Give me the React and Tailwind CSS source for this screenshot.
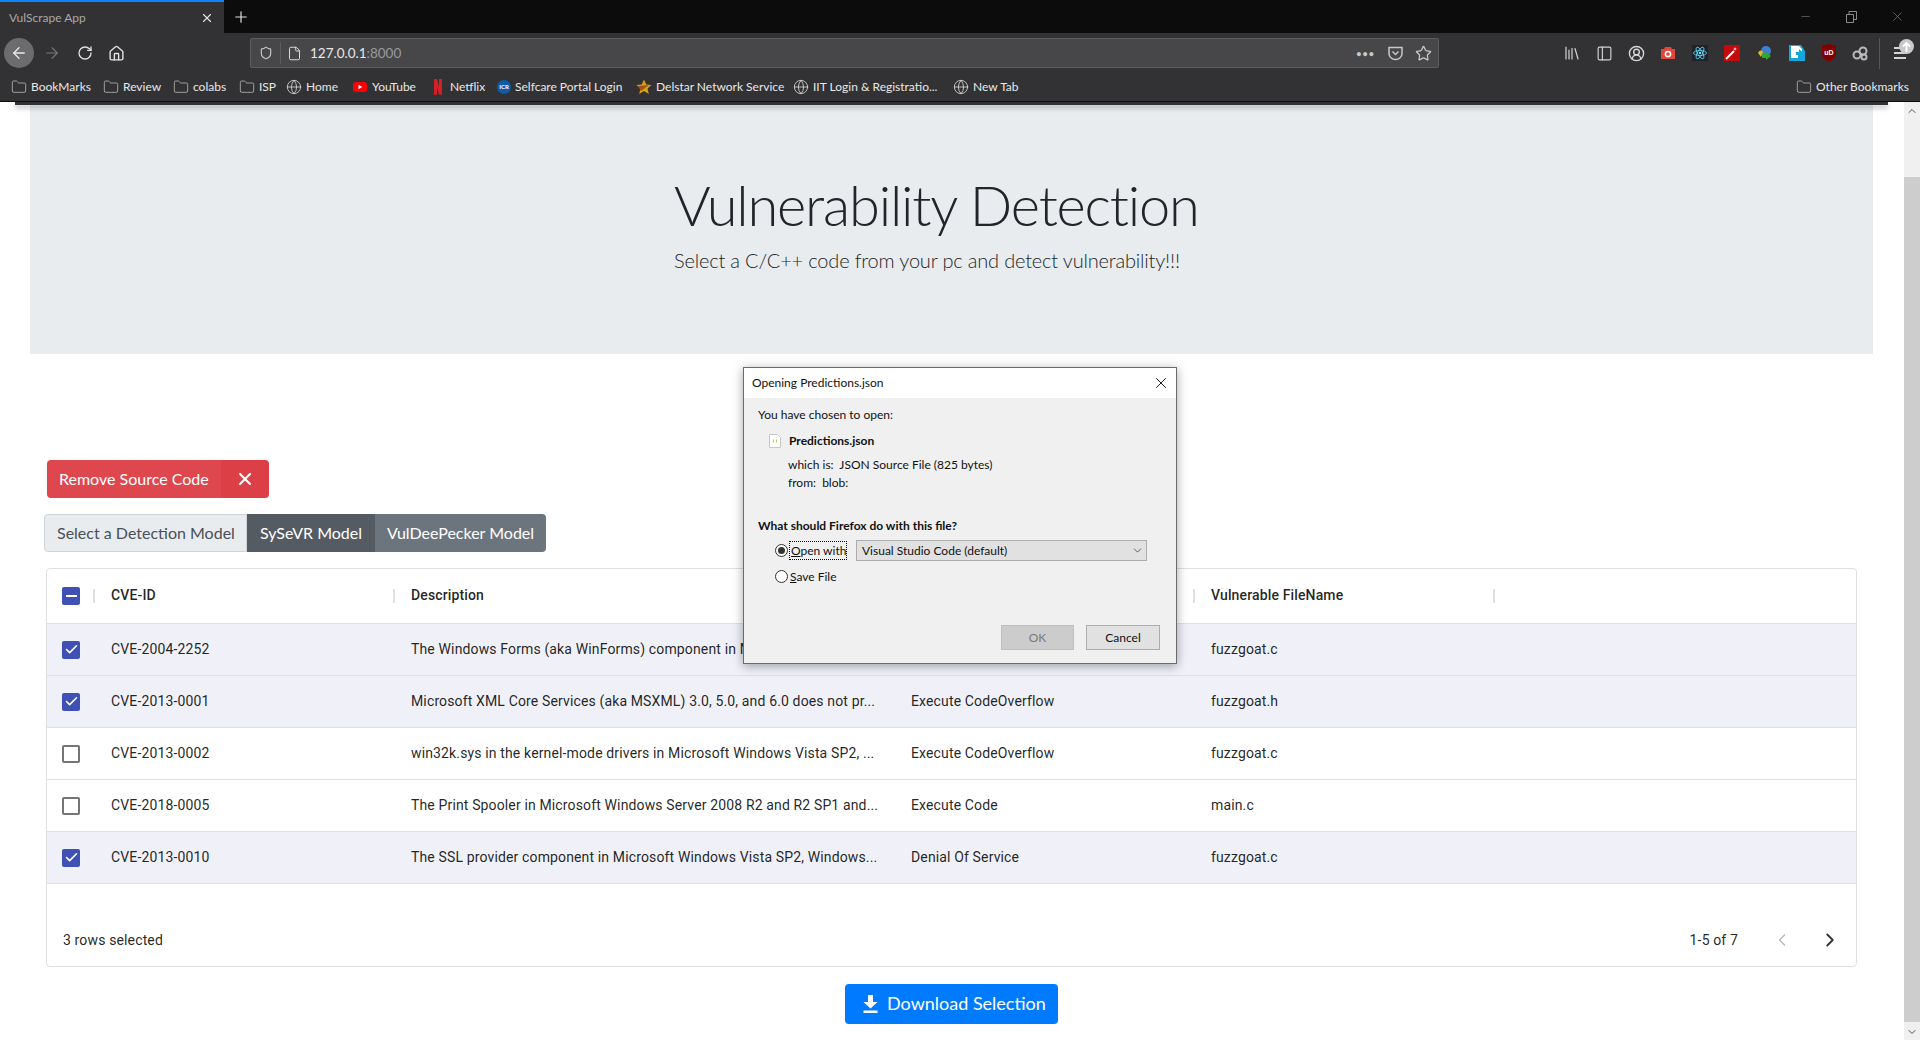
import { ArrowLeft, ArrowRight, RotateCw, Home, File, Folder, Globe, Star, Library, PanelLeft, CircleUserRound, X, Plus, Minus, ChevronLeft, ChevronRight, ChevronDown, ChevronUp, Check, Shield } from 'lucide-react'

const bookmarks = [
  { name: 'BookMarks', kind: 'folder', w: 'w-[92px]' },
  { name: 'Review', kind: 'folder', w: 'w-[70px]' },
  { name: 'colabs', kind: 'folder', w: 'w-[66px]' },
  { name: 'ISP', kind: 'folder', w: 'w-[47px]' },
  { name: 'Home', kind: 'globe', w: 'w-[66px]' },
  { name: 'YouTube', kind: 'yt', w: 'w-[78px]' },
  { name: 'Netflix', kind: 'netflix', w: 'w-[67px]' },
  { name: 'Selfcare Portal Login', kind: 'icr', w: 'w-[139px]' },
  { name: 'Delstar Network Service', kind: 'star', w: 'w-[157px]' },
  { name: 'IIT Login & Registratio...', kind: 'globe', w: 'w-[160px]' },
  { name: 'New Tab', kind: 'globe', w: 'w-[80px]' },
]

const rows = [
  { id: 'CVE-2004-2252', desc: 'The Windows Forms (aka WinForms) component in Microsoft .NET Framework 1.0 SP3...', type: 'Execute Code', file: 'fuzzgoat.c', on: true },
  { id: 'CVE-2013-0001', desc: 'Microsoft XML Core Services (aka MSXML) 3.0, 5.0, and 6.0 does not pr...', type: 'Execute CodeOverflow', file: 'fuzzgoat.h', on: true },
  { id: 'CVE-2013-0002', desc: 'win32k.sys in the kernel-mode drivers in Microsoft Windows Vista SP2, ...', type: 'Execute CodeOverflow', file: 'fuzzgoat.c', on: false },
  { id: 'CVE-2018-0005', desc: 'The Print Spooler in Microsoft Windows Server 2008 R2 and R2 SP1 and...', type: 'Execute Code', file: 'main.c', on: false },
  { id: 'CVE-2013-0010', desc: 'The SSL provider component in Microsoft Windows Vista SP2, Windows...', type: 'Denial Of Service', file: 'fuzzgoat.c', on: true },
]

function BookmarkIcon({ kind }) {
  if (kind === 'folder') return <Folder size={16} strokeWidth={1} className="shrink-0 text-[#d4d4d5]" />
  if (kind === 'globe') return <Globe size={16} strokeWidth={1.3} className="shrink-0 text-[#d4d4d5]" />
  if (kind === 'yt') {
    return (
      <svg width="16" height="16" viewBox="0 0 16 16" className="shrink-0">
        <rect x="1" y="3" width="14" height="10" rx="3" fill="#f00" />
        <path d="M6.5 5.8v4.4L10.2 8z" fill="#fff" />
      </svg>
    )
  }
  if (kind === 'netflix') {
    return (
      <svg width="16" height="16" viewBox="0 0 16 16" className="shrink-0">
        <path d="M4 0h3l2 8V0h3v16l-3-.5L7 8v7.6L4 16z" fill="#d81f26" />
      </svg>
    )
  }
  if (kind === 'icr') {
    return (
      <div className="flex h-[14px] w-[14px] shrink-0 items-center justify-center rounded-full bg-[#0b5cad] text-[6px] font-bold leading-none text-white">
        ICR
      </div>
    )
  }
  return (
    <svg width="16" height="16" viewBox="0 0 16 16" className="shrink-0">
      <path d="M8 .5l2.2 5 5.3.4-4 3.5 1.3 5.6L8 11.900 3.200 15l1.300-5.600-4-3.500 5.300-.4z" fill="#d9a21b" />
      <path d="M2 7l11-1-8 6z" fill="#a5521a" />
    </svg>
  )
}

function Extensions() {
  return (
    <div className="flex items-center">
      <div className="flex w-[32px] justify-center">
        <Library size={18} strokeWidth={1.6} className="text-[#d4d4d5]" />
      </div>
      <div className="flex w-[32px] justify-center">
        <PanelLeft size={17} strokeWidth={1.6} className="text-[#d4d4d5]" />
      </div>
      <div className="flex w-[32px] justify-center">
        <CircleUserRound size={17} strokeWidth={2} className="text-[#d4d4d5]" />
      </div>
      <div className="flex w-[32px] justify-center">
        <svg width="16" height="16" viewBox="0 0 16 16">
          <path d="M1 4h3l1-2h6l1 2h3v10H1z" fill="#e2473c" />
          <circle cx="8" cy="9" r="2.600" fill="none" stroke="#fff" strokeWidth="1.500" />
        </svg>
      </div>
      <div className="flex w-[32px] justify-center">
        <svg width="16" height="16" viewBox="0 0 16 16">
          <rect width="16" height="16" fill="#20232a" />
          <g fill="none" stroke="#61dafb" strokeWidth="0.800">
            <ellipse cx="8" cy="8" rx="6.500" ry="2.500" />
            <ellipse cx="8" cy="8" rx="6.500" ry="2.500" transform="rotate(60 8 8)" />
            <ellipse cx="8" cy="8" rx="6.500" ry="2.500" transform="rotate(120 8 8)" />
          </g>
          <circle cx="8" cy="8" r="1.300" fill="#61dafb" />
        </svg>
      </div>
      <div className="flex w-[32px] justify-center">
        <svg width="16" height="16" viewBox="0 0 16 16">
          <rect width="16" height="16" fill="#c40b0b" />
          <path d="M2 14L10 6" stroke="#fff" strokeWidth="2" />
          <path d="M11 2l.5 1.500L13 4l-1.500.5L11 6l-.5-1.500L9 4l1.500-.5z" fill="#fff" />
        </svg>
      </div>
      <div className="flex w-[33px] justify-center">
        <svg width="16" height="16" viewBox="0 0 16 16">
          <circle cx="9" cy="6" r="5" fill="#3f7fd0" />
          <path d="M1 8c2-3 3-3 5-1l-2 5z" fill="#e9b320" />
          <path d="M5 9h4V7l5 4-5 4v-2H5z" fill="#31a82c" />
        </svg>
      </div>
      <div className="flex w-[32px] justify-center">
        <svg width="16" height="16" viewBox="0 0 16 16">
          <path d="M0 0h12l4 6v10H0z" fill="#14a5dd" />
          <path d="M2 1h8l3 3v4H9v5H2z" fill="#fff" />
          <path d="M7 7h3V4l5 4.500L10 13v-3H7z" fill="#14a5dd" />
        </svg>
      </div>
      <div className="flex w-[31px] justify-center">
        <svg width="16" height="18" viewBox="0 0 16 18">
          <path d="M8 0l7 2v8c0 4-4 6-7 8-3-2-7-4-7-8V2z" fill="#800000" />
          <text x="8" y="11" textAnchor="middle" fontSize="7" fontWeight="700" fill="#fff" fontFamily="Liberation Sans, sans-serif">uD</text>
        </svg>
      </div>
      <div className="flex w-[32px] justify-center">
        <svg width="18" height="16" viewBox="0 0 18 16">
          <g fill="none" stroke="#b9b9ba" strokeWidth="2">
            <circle cx="6" cy="10" r="3.500" />
            <circle cx="12" cy="6" r="3.500" />
            <circle cx="13" cy="12" r="2.500" />
          </g>
        </svg>
      </div>
    </div>
  )
}

function BrowserChrome() {
  return (
    <div className="relative z-10 shrink-0 bg-[#323234]">
      <div className="flex h-[33px] items-center bg-[#0c0c0d]">
        <div className="flex h-full w-[224px] items-center justify-between border-t-2 border-[#0a84ff] bg-[#323234] pl-[9px] pr-[10px] text-[12px] text-[#a9a9aa]">
          <span>VulScrape App</span>
          <X size={14} strokeWidth={2} className="text-[#e0e0e1]" />
        </div>
        <Plus size={18} strokeWidth={1.6} className="ml-[8px] text-[#e0e0e1]" />
        <div className="ml-auto flex items-center">
          <div className="flex w-[46px] justify-center">
            <Minus size={13} strokeWidth={1} className="text-[#8c8c8d]" />
          </div>
          <div className="flex w-[46px] justify-center">
            <svg width="11" height="12" viewBox="0 0 11 12" fill="none" stroke="#8c8c8d">
              <path d="M.5 3.500h7v8h-7zM3 3.500V.5h7.500v8H7.500" />
            </svg>
          </div>
          <div className="flex w-[46px] justify-center">
            <X size={15} strokeWidth={1} className="text-[#8c8c8d]" />
          </div>
        </div>
      </div>

      <div className="flex h-[38px] items-center pl-[4px] pt-[2px]">
        <div className="flex h-[30px] w-[30px] items-center justify-center rounded-full bg-[#6c6c6e]">
          <ArrowLeft size={18} strokeWidth={1.8} className="text-[#e8e8e9]" />
        </div>
        <ArrowRight size={18} strokeWidth={1.5} className="ml-[9px] text-[#78787a]" />
        <RotateCw size={16} strokeWidth={2} className="ml-[16px] text-[#e0e0e1]" />
        <Home size={17} strokeWidth={2} className="ml-[15px] text-[#e0e0e1]" />
        <div className="ml-[125px] flex h-[30px] w-[1189px] items-center rounded-[2px] border border-[#5d5d5f] bg-[#474749] pl-[8px] pr-[6px]">
          <Shield size={14} strokeWidth={2} className="text-[#c8c8c9]" />
          <div className="ml-[7px] h-[22px] w-px bg-[#5d5d5f]" />
          <File size={15} strokeWidth={1.6} className="ml-[6px] text-[#dcdcdd]" />
          <span className="ml-[8px] text-[13.5px] text-[#e8e8e9]">
            127.0.0.1<span className="text-[#9a9a9b]">:8000</span>
          </span>
          <span className="ml-auto text-[9px] font-bold leading-none tracking-[1px] text-[#c8c8c9]">•••</span>
          <svg width="17" height="17" viewBox="0 0 17 17" fill="none" stroke="#c8c8c9" strokeWidth="1.500" className="ml-[12px]">
            <path d="M2 2.500h13v6c0 3.500-3 6-6.500 6S2 12 2 8.500z" />
            <path d="M5.500 6.500l3 3 3-3" />
          </svg>
          <Star size={17} strokeWidth={1.8} className="ml-[11px] text-[#c8c8c9]" />
        </div>
        <div className="ml-auto flex items-center">
          <Extensions />
          <div className="ml-[3px] h-[31px] w-px bg-[#57575a]" />
          <div className="relative flex w-[40px] justify-center">
            <svg width="14" height="14" viewBox="0 0 14 14" stroke="#d4d4d5" strokeWidth="2">
              <path d="M1 2h12M1 7h12M1 12h12" />
            </svg>
            <div className="absolute -top-[7px] right-[6px] flex h-[15px] w-[15px] items-center justify-center rounded-full bg-[#c9c9ca]">
              <svg width="9" height="10" viewBox="0 0 9 10" fill="none" stroke="#fff" strokeWidth="1.800">
                <path d="M4.500 10V1M1 4.500L4.500 1 8 4.500" />
              </svg>
            </div>
          </div>
        </div>
      </div>

      <div className="flex h-[31px] items-center border-b border-[#0c0c0d] pl-[11px] pr-[11px] pt-[2px] text-[12px] text-[#e8e8e9]">
        {bookmarks.map((b) => (
          <div key={b.name} className={`flex items-center gap-[4px] ${b.w}`}>
            <BookmarkIcon kind={b.kind} />
            <span className="whitespace-nowrap">{b.name}</span>
          </div>
        ))}
        <div className="ml-auto flex items-center gap-[4px]">
          <BookmarkIcon kind="folder" />
          <span>Other Bookmarks</span>
        </div>
      </div>
    </div>
  )
}

function GridCheckbox({ on, partial }) {
  if (on || partial) {
    return (
      <div className="flex h-[18px] w-[18px] items-center justify-center rounded-[2px] bg-[#3f51b5]">
        {partial
          ? <div className="h-[2px] w-[11px] bg-white" />
          : <Check size={15} strokeWidth={2.6} className="text-white" />}
      </div>
    )
  }
  return <div className="h-[18px] w-[18px] rounded-[2px] border-2 border-[#757575]" />
}

function Separator() {
  return <div className="ml-auto h-[14px] w-[2px] bg-[#e0e0e0]" />
}

function DataTable() {
  return (
    <div className="ml-[46px] mt-[16px] h-[399px] w-[1811px] rounded-[4px] border border-[#e0e0e0] font-['Roboto',sans-serif] text-[14px] tracking-[0.14px] text-[rgba(0,0,0,0.87)]">
      <div className="flex h-[55px] items-center border-b border-[#e0e0e0] pb-[1px] font-medium">
        <div className="flex w-[48px] items-center pl-[15px]">
          <GridCheckbox partial />
          <Separator />
        </div>
        <div className="flex w-[300px] items-center pl-[16px]">CVE-ID<Separator /></div>
        <div className="flex w-[500px] items-center pl-[16px]">Description<Separator /></div>
        <div className="flex w-[300px] items-center pl-[16px]">Vulnerability Type<Separator /></div>
        <div className="flex w-[300px] items-center pl-[16px]">Vulnerable FileName<Separator /></div>
      </div>
      {rows.map((r) => (
        <div key={r.id} className={`flex h-[52px] items-center border-b border-[#e0e0e0] ${r.on ? 'bg-[#eff0f8]' : ''}`}>
          <div className="w-[48px] pl-[15px]"><GridCheckbox on={r.on} /></div>
          <div className="w-[300px] pl-[16px]">{r.id}</div>
          <div className="w-[500px] truncate pl-[16px] pr-[16px]">{r.desc}</div>
          <div className="w-[300px] pl-[16px]">{r.type}</div>
          <div className="w-[300px] pl-[16px]">{r.file}</div>
        </div>
      ))}
      <div className="flex h-[82px] items-center pl-[16px] pr-[15px] pt-[30px]">
        <span>3 rows selected</span>
        <span className="ml-auto">1-5 of 7</span>
        <ChevronLeft size={20} strokeWidth={2} className="ml-[34px] text-[#bdbdbd]" />
        <ChevronRight size={22} strokeWidth={2} className="ml-[27px] text-[#333]" />
      </div>
    </div>
  )
}

function SaveDialog() {
  return (
    <div className="absolute left-[743px] top-[367px] z-20 h-[297px] w-[434px] border border-[#6b6b6b] bg-[#f0f0f0] font-['Lato',sans-serif] text-[12px] text-[#111] shadow-[0_2px_10px_rgba(0,0,0,0.35)]">
      <div className="flex h-[30px] items-center justify-between bg-white pb-[1px] pl-[8px] pr-[6px]">
        <span>Opening Predictions.json</span>
        <X size={18} strokeWidth={1.2} className="text-black" />
      </div>
      <div className="pl-[14px] pr-[14px] pt-[8px]">
        <p className="leading-[17px]">You have chosen to open:</p>
        <div className="ml-[11px] mt-[9px] flex items-center gap-[8px]">
          <svg width="12" height="14" viewBox="0 0 12 14" fill="#fff" stroke="#c6c6c6">
            <path d="M.5.5h8l3 3v10H.5z" />
            <path d="M4.500 5.500v3M7.500 5.500v3" stroke="#c9c94a" />
          </svg>
          <span className="font-bold">Predictions.json</span>
        </div>
        <div className="ml-[30px] mt-[6px] leading-[18px]">
          <p>which is:&nbsp; JSON Source File (825 bytes)</p>
          <p>from:&nbsp; blob:</p>
        </div>
        <p className="mt-[25px] font-bold leading-[17px]">What should Firefox do with this file?</p>
        <div className="ml-[17px] mt-[6px] flex items-center">
          <div className="flex h-[13px] w-[13px] items-center justify-center rounded-full border border-[#333] bg-white">
            <div className="h-[7px] w-[7px] rounded-full bg-[#333]" />
          </div>
          <span className="ml-[1px] w-[58px] whitespace-nowrap border border-dotted border-black px-[1px] leading-[17px]"><u>O</u>pen with</span>
          <div className="ml-[9px] flex h-[21px] w-[291px] items-center justify-between border border-[#adadad] bg-[#e1e1e1] pl-[5px] pr-[2px]">
            <span>Visual Studio Code (default)</span>
            <ChevronDown size={13} strokeWidth={1.4} className="text-[#333]" />
          </div>
        </div>
        <div className="ml-[17px] mt-[7px] flex items-center">
          <div className="h-[13px] w-[13px] rounded-full border border-[#333] bg-white" />
          <span className="ml-[2px] leading-[17px]"><u>S</u>ave File</span>
        </div>
      </div>
      <div className="mr-[16px] mt-[40px] flex justify-end gap-[12px]">
        <div className="flex h-[25px] w-[73px] items-center justify-center border border-[#bfbfbf] bg-[#cccccc] text-[#7a7a7a]">OK</div>
        <div className="flex h-[25px] w-[74px] items-center justify-center border border-[#adadad] bg-[#e1e1e1]">Cancel</div>
      </div>
    </div>
  )
}

export default function App() {
  return (
    <div className="relative flex h-[1040px] flex-col overflow-hidden bg-white font-['Lato',sans-serif]">
      <BrowserChrome />
      <div className="flex min-h-0 flex-1">
        <div className="relative min-w-0 flex-1">
          <div className="absolute left-[15px] top-0 h-[3px] w-[1873px] bg-[#323234] shadow-[0_3px_5px_rgba(0,0,0,0.3)]" />
          <div className="ml-[30px] mt-[3px] flex h-[249px] w-[1843px] flex-col items-start bg-[#e9ecef] pl-[644px] pt-[66px] text-[#212529]">
            <h1 className="text-[56px] font-light leading-[67px] tracking-[-1.2px]">Vulnerability Detection</h1>
            <p className="mt-[7px] text-[20px] font-light leading-[30px] tracking-[-0.18px]">Select a C/C++ code from your pc and detect vulnerability!!!</p>
          </div>

          <div className="ml-[47px] mt-[106px] flex h-[38px] w-[222px] text-[16px] text-white">
            <div className="flex w-[174px] items-center rounded-l-[4px] bg-[#df474e] pl-[12px]">Remove Source Code</div>
            <div className="flex w-[48px] items-center justify-center rounded-r-[4px] bg-[#dc3f45]">
              <X size={20} strokeWidth={2.6} />
            </div>
          </div>

          <div className="ml-[44px] mt-[16px] flex h-[38px] w-[502px] text-[16px]">
            <div className="flex w-[203px] items-center rounded-l-[4px] border border-[#ced4da] bg-[#e9ecef] pl-[12px] text-[#495057]">Select a Detection Model</div>
            <div className="flex w-[128px] items-center justify-center bg-[#545b62] text-white">SySeVR Model</div>
            <div className="flex w-[171px] items-center justify-center rounded-r-[4px] bg-[#6c757d] text-white">VulDeePecker Model</div>
          </div>

          <DataTable />

          <div className="ml-[845px] mt-[17px] flex h-[40px] w-[213px] items-center gap-[9px] rounded-[4px] bg-[#007bff] pl-[18px] text-[18px] text-white">
            <svg width="15" height="18" viewBox="0 0 15 18" fill="#fff">
              <path d="M5 0h5v7h4.500L7.500 13.500.5 7H5zM.5 15.500h14V18H.5z" />
            </svg>
            <span className="pb-[2px]">Download Selection</span>
          </div>
        </div>

        <div className="flex w-[16px] shrink-0 flex-col items-center bg-[#f0f0f0]">
          <ChevronUp size={12} className="mt-[3px] text-[#505050]" />
          <div className="mt-[60px] h-[845px] w-full bg-[#cdcdcd]" />
          <ChevronDown size={12} className="mt-[4px] text-[#505050]" />
        </div>
      </div>
      <SaveDialog />
    </div>
  )
}
